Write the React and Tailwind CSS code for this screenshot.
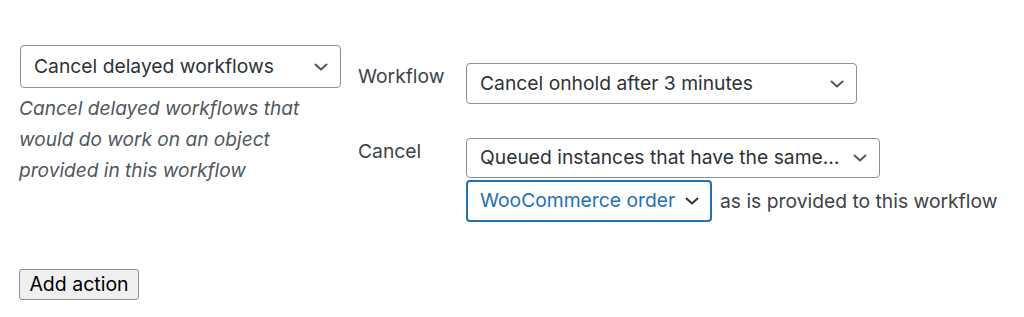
import React from 'react';

function Chevron({ className = 'text-[#50575e]' }) {
    return (
        <svg width="14" height="8" viewBox="0 0 14 8" fill="none" className={className}>
            <path d="M1.5 1.5L7 6.5L12.5 1.5" stroke="currentColor" strokeWidth="2" strokeLinecap="round" strokeLinejoin="round" />
        </svg>
    );
}

function FakeSelect({ label, className = '', focused = false }) {
    return (
        <div
            className={`flex items-center justify-between rounded-[4px] bg-white ${
                focused
                    ? 'border-2 border-[#2271b1] pl-[12px] pr-[11px] text-[#2271b1]'
                    : 'border border-[#8c8f94] pl-[13px] pr-[12px] text-[#2c3338]'
            } ${className}`}
        >
            <span className="whitespace-nowrap text-[19.3px] leading-none">{label}</span>
            <Chevron className={focused ? 'text-[#2c3338] ml-[6px] shrink-0' : 'text-[#50575e] ml-[6px] shrink-0'} />
        </div>
    );
}

export default function App() {
    return (
        <div className="min-h-[317px] bg-white pl-[19px] pt-[45px] font-['Inter','Liberation_Sans',sans-serif]">
            <div className="flex">
                {/* Action type */}
                <div className="w-[322px] shrink-0">
                    <FakeSelect label="Cancel delayed workflows" className="ml-[1px] h-[43px] w-[321px]" />
                    <p className="mt-[5px] text-[19.1px] leading-[31px] italic text-[#50575e]">
                        Cancel delayed workflows that would do work on an object provided in this workflow
                    </p>
                </div>

                {/* Fields */}
                <div className="ml-[17px] pt-[18px]">
                    <div className="flex">
                        <div className="w-[108px] text-[19.3px] leading-[26px] text-[#3c434a]">Workflow</div>
                        <FakeSelect label="Cancel onhold after 3 minutes" className="h-[41px] w-[391px]" />
                    </div>
                    <div className="mt-[34px] flex">
                        <div className="w-[108px] text-[19.3px] leading-[26px] text-[#3c434a]">Cancel</div>
                        <div>
                            <FakeSelect label="Queued instances that have the same..." className="h-[40px] w-[414px]" />
                            <div className="mt-[2px] flex items-center">
                                <FakeSelect label="WooCommerce order" focused className="h-[42px] w-[246px]" />
                                <span className="ml-[8px] whitespace-nowrap text-[19.3px] text-[#3c434a]">as is provided to this workflow</span>
                            </div>
                        </div>
                    </div>
                </div>
            </div>

            <button className="mt-[47px] h-[31px] w-[120px] rounded-[3px] border border-[#8c8f94] bg-[#efefef] text-[19.5px] leading-none text-black">
                Add action
            </button>
        </div>
    );
}
